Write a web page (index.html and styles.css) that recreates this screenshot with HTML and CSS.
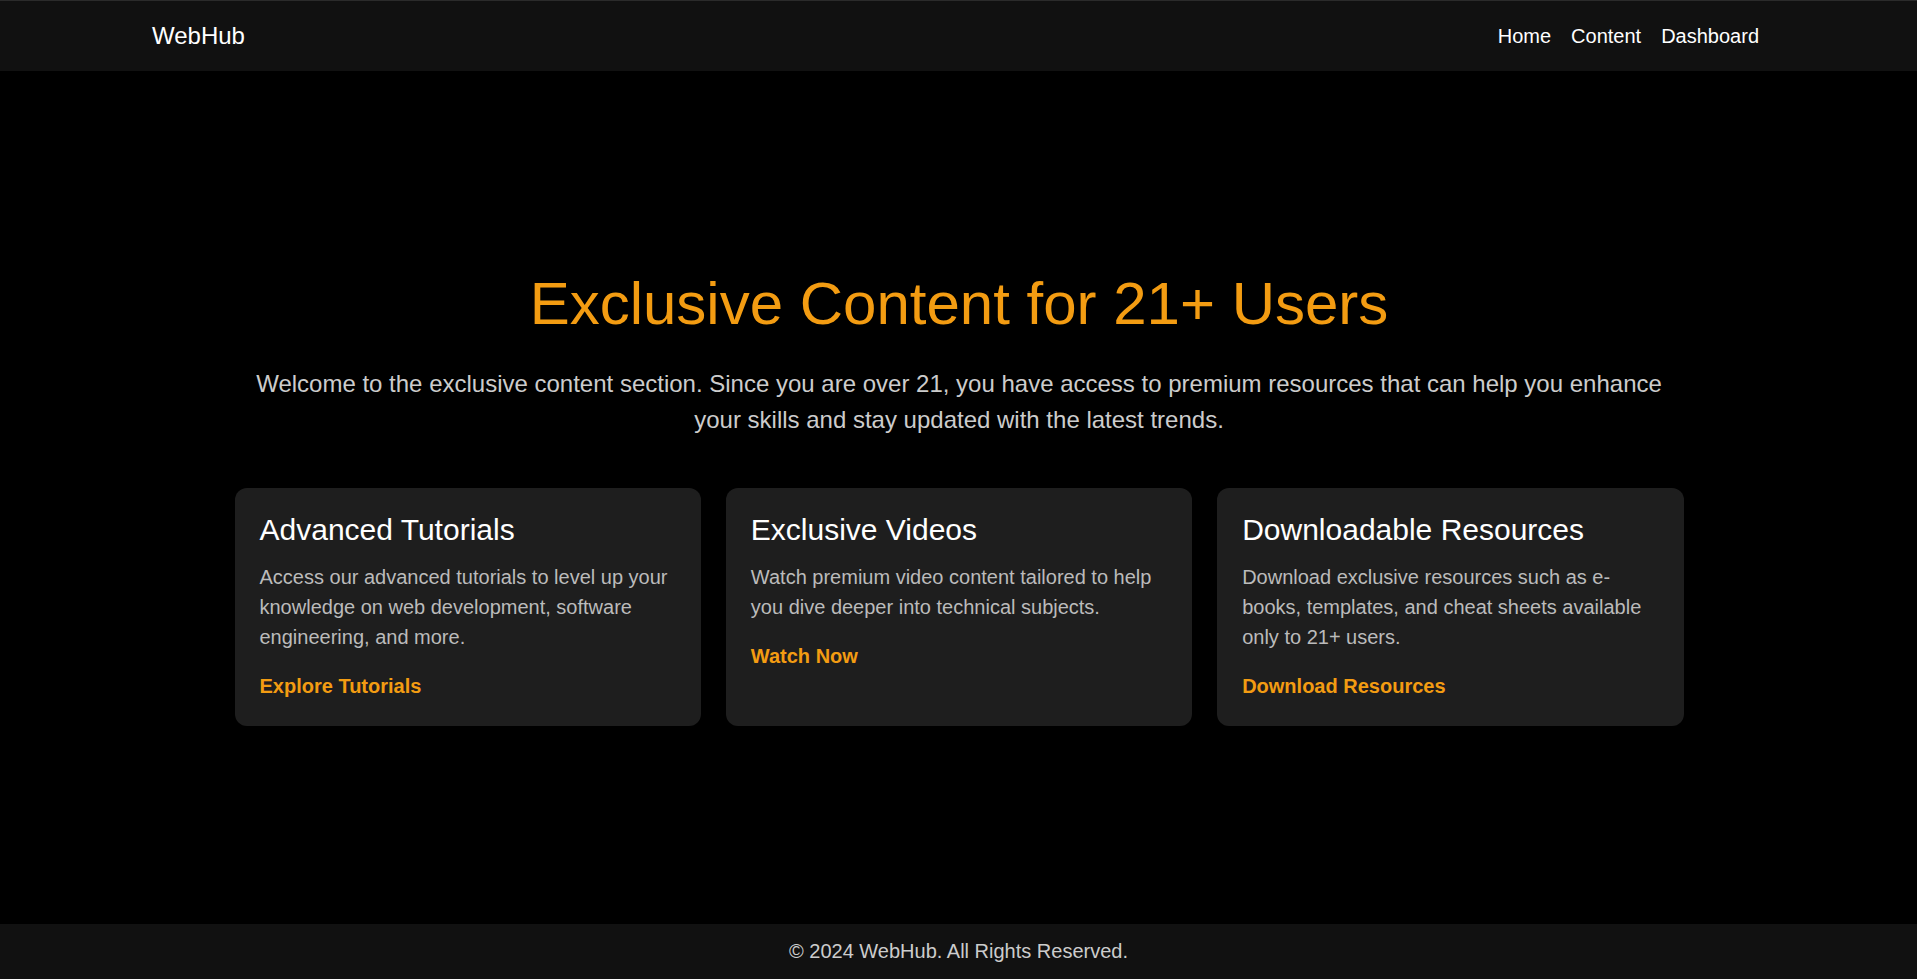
FILE: index.html
```html
<!DOCTYPE html>
<html lang="en">
<head>
<meta charset="UTF-8">
<title>WebHub - Exclusive Content</title>
<link rel="stylesheet" href="styles.css">
</head>
<body>
<header class="site-header">
  <div class="header-inner">
    <a class="logo" href="#">WebHub</a>
    <nav class="nav">
      <a href="#">Home</a>
      <a href="#">Content</a>
      <a href="#">Dashboard</a>
    </nav>
  </div>
</header>
<main class="main">
  <section class="hero">
    <h1 class="hero-title">Exclusive Content for 21+ Users</h1>
    <p class="hero-text">Welcome to the exclusive content section. Since you are over 21, you have access to premium resources that can help you enhance your skills and stay updated with the latest trends.</p>
    <div class="cards">
      <article class="card">
        <h3 class="card-title">Advanced Tutorials</h3>
        <p class="card-text">Access our advanced tutorials to level up your knowledge on web development, software engineering, and more.</p>
        <a class="card-link" href="#">Explore Tutorials</a>
      </article>
      <article class="card">
        <h3 class="card-title">Exclusive Videos</h3>
        <p class="card-text">Watch premium video content tailored to help you dive deeper into technical subjects.</p>
        <a class="card-link" href="#">Watch Now</a>
      </article>
      <article class="card">
        <h3 class="card-title">Downloadable Resources</h3>
        <p class="card-text">Download exclusive resources such as e-books, templates, and cheat sheets available only to 21+ users.</p>
        <a class="card-link" href="#">Download Resources</a>
      </article>
    </div>
  </section>
</main>
<footer class="site-footer">
  <p>&copy; 2024 WebHub. All Rights Reserved.</p>
</footer>
</body>
</html>
```
FILE: styles.css
```css
* {
  box-sizing: border-box;
}

html, body {
  margin: 0;
  padding: 0;
}

body {
  min-height: 100vh;
  display: flex;
  flex-direction: column;
  background: #000;
  color: #fff;
  font-family: "Liberation Sans", Arial, sans-serif;
}

a {
  text-decoration: none;
}

.site-header {
  background: #111;
  border-top: 1px solid #2b2b2b;
  height: 71px;
  flex-shrink: 0;
}

.header-inner {
  height: 100%;
  padding: 0 158px 0 152px;
  display: flex;
  align-items: center;
  justify-content: space-between;
}

.logo {
  color: #fff;
  font-size: 24px;
}

.nav {
  display: flex;
  gap: 20px;
}

.nav a {
  color: #fff;
  font-size: 20px;
}

.main {
  flex: 1;
  display: flex;
  align-items: center;
  justify-content: center;
}

.hero {
  width: 100%;
  max-width: 1450px;
  text-align: center;
  padding-left: 1px;
}

.hero-title {
  margin: 0 0 28px;
  font-size: 60px;
  font-weight: 400;
  line-height: 1.15;
  color: #f39c12;
}

.hero-text {
  margin: 0 0 50px;
  font-size: 24px;
  line-height: 1.5;
  color: #ccc;
}

.cards {
  display: grid;
  grid-template-columns: repeat(3, 1fr);
  gap: 25px;
  text-align: left;
}

.card {
  background: #1e1e1e;
  border-radius: 12px;
  padding: 25px;
}

.card-title {
  margin: 0 0 14px;
  font-size: 30px;
  font-weight: 400;
  line-height: 1.15;
  color: #fff;
}

.card-text {
  margin: 0 0 19px;
  font-size: 20px;
  line-height: 30px;
  color: #bbb;
}

.card-link {
  display: block;
  font-size: 20px;
  line-height: 30px;
  font-weight: 700;
  color: #f39c12;
}

.site-footer {
  background: #111;
  height: 55px;
  flex-shrink: 0;
  display: flex;
  align-items: center;
  justify-content: center;
}

.site-footer p {
  margin: 0;
  font-size: 20px;
  color: #ccc;
}
```
